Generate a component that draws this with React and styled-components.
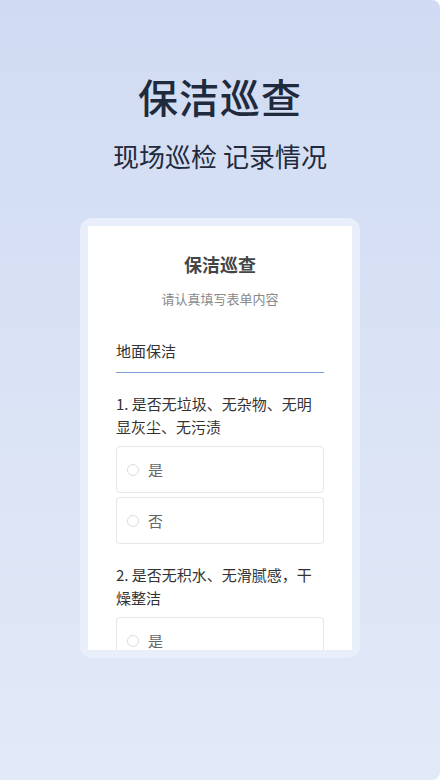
import React from 'react';
import styled, { createGlobalStyle } from 'styled-components';

const GlobalStyle = createGlobalStyle`
	html, body {
		margin: 0;
		padding: 0;
		background: #ffffff;
	}
	body {
		font-family: "Noto Sans CJK SC", "Noto Sans", sans-serif;
	}
`;

const Page = styled.div`
	width: 440px;
	height: 780px;
	box-sizing: border-box;
	background: linear-gradient(180deg, #d0dbf3 0%, #dae3f5 50%, #e2e9f7 100%);
	border-radius: 0 8px 8px 0;
	display: flex;
	flex-direction: column;
	align-items: center;
	padding-top: 68px;
	overflow: hidden;
`;

const Hero = styled.h1`
	margin: 0;
	font-size: 40px;
	line-height: 56px;
	font-weight: 500;
	color: #1f2a3c;
	letter-spacing: 1px;
`;

const Tagline = styled.p`
	margin: 14px 0 0;
	font-size: 26px;
	line-height: 36px;
	font-weight: 400;
	color: #1f2a3c;
`;

const Frame = styled.div`
	margin-top: 44px;
	width: 280px;
	height: 440px;
	box-sizing: border-box;
	padding: 8px;
	background: #e8eefa;
	border-radius: 12px;
`;

const Sheet = styled.div`
	height: 100%;
	background: #ffffff;
	overflow: hidden;
	padding: 0 28px;
	box-sizing: border-box;
`;

const SheetTitle = styled.h2`
	margin: 24px 0 0;
	text-align: center;
	font-size: 18px;
	line-height: 28px;
	font-weight: 700;
	color: #454545;
`;

const SheetHint = styled.p`
	margin: 11px 0 0;
	text-align: center;
	font-size: 13px;
	line-height: 20px;
	color: #8a8a8a;
`;

const Section = styled.div`
	margin-top: 31px;
	padding-bottom: 10px;
	font-size: 15px;
	line-height: 22px;
	color: #333333;
	border-bottom: 1px solid #7d9fd0;
`;

const Question = styled.p`
	margin: 19px 0 8px;
	font-size: 15px;
	line-height: 23px;
	color: #333333;
`;

const Options = styled.div`
	display: flex;
	flex-direction: column;
	gap: 4px;
`;

const Option = styled.label`
	display: flex;
	align-items: center;
	gap: 9px;
	height: 47px;
	padding: 0 10px;
	box-sizing: border-box;
	border: 1px solid #e6e6e6;
	border-radius: 4px;
	font-size: 15px;
	color: #666666;
`;

const Radio = styled.span`
	width: 12px;
	height: 12px;
	border: 1px solid #dcdcdc;
	border-radius: 50%;
	box-sizing: border-box;
`;

const questions = [
	{ text: '1. 是否无垃圾、无杂物、无明显灰尘、无污渍', options: ['是', '否'] },
	{ text: '2. 是否无积水、无滑腻感，干燥整洁', options: ['是', '否'] },
];

export default function App() {
	return (
		<>
			<GlobalStyle />
			<Page>
				<Hero>保洁巡查</Hero>
				<Tagline>现场巡检 记录情况</Tagline>
				<Frame>
					<Sheet>
						<SheetTitle>保洁巡查</SheetTitle>
						<SheetHint>请认真填写表单内容</SheetHint>
						<Section>地面保洁</Section>
						{questions.map((q, i) => (
							<div key={i}>
								<Question>{q.text}</Question>
								<Options>
									{q.options.map(o => (
										<Option key={o}>
											<Radio />
											{o}
										</Option>
									))}
								</Options>
							</div>
						))}
					</Sheet>
				</Frame>
			</Page>
		</>
	);
}
